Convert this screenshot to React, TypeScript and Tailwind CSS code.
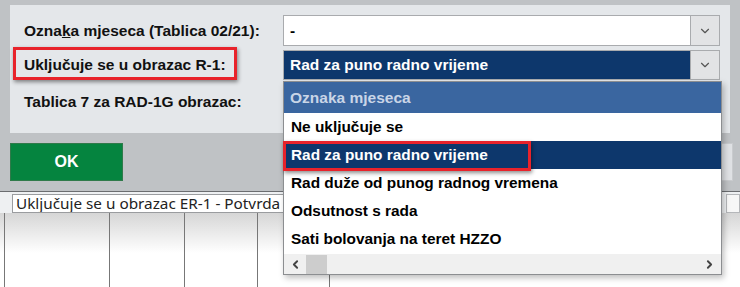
import { ChevronDown, ChevronLeft, ChevronRight } from 'lucide-react';

const items = [
    'Ne uključuje se',
    'Rad za puno radno vrijeme',
    'Rad duže od punog radnog vremena',
    'Odsutnost s rada',
    'Sati bolovanja na teret HZZO',
];

const Combo = ({ value, active }: { value: string; active?: boolean }) => (
    <div className="flex h-full border border-[#a9abae]">
        <div className={`flex-1 flex items-center pl-[6px] font-bold text-[15.5px] ${active ? 'bg-[#0d376c] text-white' : 'bg-white text-black'}`}>
            {value}
        </div>
        <div className="w-[29px] flex items-center justify-center bg-[#e2e3e5] border-l border-[#a9abae]">
            <ChevronDown size={14} strokeWidth={2} className="text-[#555]" />
        </div>
    </div>
);

const App = () => {
    return (
        <div className="relative w-[740px] h-[287px] overflow-hidden bg-[#bfc2c5] font-['Liberation_Sans',Arial,sans-serif] text-[#111]">
            {/* Gornji panel s poljima */}
            <div className="pt-[5px] px-[10px]">
                <div className="h-[128px] bg-[#e4e7ea] pt-[10px] pr-[10px]">
                    <div className="grid grid-cols-[273px_1fr] grid-rows-[31px_30px_36px] gap-y-[4px]">
                        <div className="flex items-center pl-[14px] font-bold text-[15.5px]">
                            Ozna<span className="underline">k</span>a mjeseca (Tablica 02/21):
                        </div>
                        <Combo value="-" />
                        <div className="flex items-center pl-[14px] font-bold text-[15.5px]">Uključuje se u obrazac R-1:</div>
                        <Combo value="Rad za puno radno vrijeme" active />
                        <div className="flex items-center pl-[14px] font-bold text-[15.5px]">Tablica 7 za RAD-1G obrazac:</div>
                        <div />
                    </div>
                </div>
            </div>

            {/* Gumbi */}
            <div className="h-[59px] px-[7px] pl-[10px] pt-[10px] border-b border-[#6b6d70] flex justify-between">
                <button className="w-[113px] h-[38px] bg-[#05843f] border border-[#2f7a4a] text-white font-bold text-[16px]">OK</button>
                <div className="w-[120px] h-[38px] bg-[#dfe1e4] border border-[#c9cbce]" />
            </div>

            {/* Donji red s poljima */}
            <div className="h-[21px] bg-[#eef0f2] pl-[12px] pt-[2px] flex gap-[6px]">
                <div className="h-[19px] w-[708px] bg-white border border-[#9a9c9f] pl-[3px] text-[15.3px] leading-[17px] font-['Noto_Sans',sans-serif] text-[#222] whitespace-nowrap overflow-hidden">
                    Uključuje se u obrazac ER-1 - Potvrda o
                </div>
                <div className="h-[19px] flex-1 bg-[#f7f7f7] border border-[#b5b7ba]" />
            </div>

            {/* Tablica */}
            <div className="flex h-[80px] bg-gradient-to-b from-[#d6d6d6] via-white to-white">
                <div className="w-[5px] border-r border-[#777]" />
                <div className="w-[105px] border-r border-[#777]" />
                <div className="w-[75px] border-r border-[#777]" />
                <div className="w-[73px] border-r border-[#777]" />
                <div className="w-[72px] border-r border-[#777]" />
                <div className="flex-1" />
            </div>

            {/* Crveni okvir oko oznake */}
            <div className="absolute left-[13px] top-[47px] w-[224px] h-[33px] border-[3px] border-[#e8232b] shadow-[1px_2px_4px_rgba(0,0,0,0.45)]" />

            {/* Padajući popis */}
            <div className="absolute left-[283px] top-[81px] w-[439px] h-[194px] bg-white border border-[#8c8e91] shadow-[2px_3px_6px_rgba(0,0,0,0.25)] flex flex-col">
                <div className="h-[31px] bg-[#3a66a0] flex items-center pl-[6px] font-bold text-[15.5px] text-[#c9d5e7]">Oznaka mjeseca</div>
                {items.map((item, i) => (
                    <div
                        key={item}
                        className={`h-[28px] flex items-center pl-[7px] font-bold text-[15.4px] ${i === 1 ? 'bg-[#0d376c] text-white' : 'text-black'}`}
                    >
                        {item}
                    </div>
                ))}
                <div className="h-[20px] mt-auto bg-[#f0f0f0] flex items-center">
                    <div className="w-[22px] flex justify-center">
                        <ChevronLeft size={13} strokeWidth={3.5} className="text-[#444]" />
                    </div>
                    <div className="w-[21px] h-[19px] bg-[#cdcdcd]" />
                    <div className="flex-1" />
                    <div className="w-[24px] flex justify-center">
                        <ChevronRight size={13} strokeWidth={3.5} className="text-[#444]" />
                    </div>
                </div>
            </div>

            {/* Crveni okvir oko odabrane stavke */}
            <div className="absolute left-[283px] top-[141px] w-[248px] h-[30px] border-[3px] border-[#e8232b] shadow-[1px_2px_4px_rgba(0,0,0,0.45)]" />
        </div>
    );
};

export default App;
